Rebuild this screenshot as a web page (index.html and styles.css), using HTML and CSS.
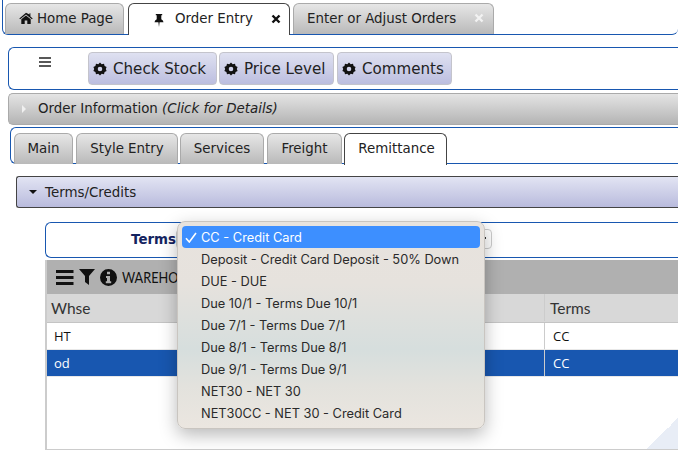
FILE: index.html
```html
<!DOCTYPE html>
<html lang="en">

<head>
  <meta charset="UTF-8" />
  <meta name="viewport" content="width=device-width, initial-scale=1" />
  <title>Order Entry</title>
  <link rel="stylesheet" href="styles.css">
</head>

<body>

  <div class="page">

    <!-- Top level tabs -->
    <div class="mainTabs">
      <div class="tab homeTab">
        <svg class="icon" width="14" height="12" viewBox="0 0 14 12"><path d="M7 0.8 0.3 6.4l.8.9L7 2.5l5.9 4.8.8-.9-2.3-1.9V1.2H10.500v1.400zM2.300 7.300V12H5.700V8.500H8.300V12H11.700V7.300L7 3.500z" /></svg>
        Home Page
      </div>
      <div class="tab tabActive orderTab">
        <svg class="icon pin" width="10" height="13" viewBox="0 0 10 13"><path d="M1.800 0H8.200V1.200H7.300V5.200Q9.300 6 9.500 8.200H5.600L5 13 4.400 8.200H.5Q.7 6 2.700 5.200V1.200H1.800z" /></svg>
        <span>Order Entry</span>
        <svg class="icon closeX" width="10" height="10" viewBox="0 0 10 10"><path d="M1.500 1.500 8.500 8.500M8.500 1.500 1.500 8.500" /></svg>
      </div>
      <div class="tab adjustTab">
        <span>Enter or Adjust Orders</span>
        <svg class="icon closeX closeLight" width="10" height="10" viewBox="0 0 10 10"><path d="M1.500 1.500 8.500 8.500M8.500 1.500 1.500 8.500" /></svg>
      </div>
    </div>

    <div class="toolbar">
      <svg class="menuIcon" width="12" height="10" viewBox="0 0 12 10"><path d="M0 1H12M0 5H12M0 9H12" /></svg>
      <button class="toolBtn" type="button"><svg class="gear" viewBox="0 0 14 14"><use href="#gearShape" /></svg>Check Stock</button>
      <button class="toolBtn" type="button"><svg class="gear" viewBox="0 0 14 14"><use href="#gearShape" /></svg>Price Level</button>
      <button class="toolBtn" type="button"><svg class="gear" viewBox="0 0 14 14"><use href="#gearShape" /></svg>Comments</button>
    </div>

    <div class="orderInfo">
      <span class="arrowRight"></span>
      <span>Order Information <em>(Click for Details)</em></span>
    </div>

    <div class="subTabs">
      <div class="tab subTab tabMain">Main</div>
      <div class="tab subTab tabStyle">Style Entry</div>
      <div class="tab subTab tabServices">Services</div>
      <div class="tab subTab tabFreight">Freight</div>
      <div class="tab subTab tabActive tabRemit">Remittance</div>
    </div>

    <div class="termsHeader">
      <span class="arrowDown"></span>
      <span>Terms/Credits</span>
    </div>

    <div class="termsForm">
      <label class="termsLabel">Terms</label>
      <div class="fakeSelect"><span class="selectDot"></span></div>
    </div>

    <div class="grid">
      <div class="gridBar">
        <svg class="barIcon" width="18" height="15" viewBox="0 0 18 15"><path d="M0 0H17.500V3H0zM0 6H17.500V9H0zM0 12H17.500V15H0z" /></svg>
        <svg class="barIcon" width="16" height="16" viewBox="0 0 16 16"><path d="M0 0H16L10 7V16L6 13V7z" /></svg>
        <svg class="barIcon" width="17" height="17" viewBox="0 0 17 17"><path fill-rule="evenodd" d="M8.500 0a8.500 8.500 0 1 0 0 17 8.500 8.500 0 0 0 0-17zM7 2.700H10V5.200H7zM6 7H10V12.300H11.200V14.300H5.800V12.300H7V9H6z" /></svg>
        <span class="barTitle">WAREHO</span>
      </div>
      <div class="gridRow gridHead">
        <div class="cellWide">Whse</div>
        <div class="cell">Terms</div>
      </div>
      <div class="gridRow">
        <div class="cellWide">HT</div>
        <div class="cell">CC</div>
      </div>
      <div class="gridRow rowSelected">
        <div class="cellWide">od</div>
        <div class="cell">CC</div>
      </div>
      <div class="gridEmpty"></div>
      <div class="gridFoot"><div class="footLeft"></div><div class="footMid"></div></div>
    </div>

    <!-- Native looking dropdown, lies over the form and grid -->
    <ul class="popup">
      <li class="popupItem popupSelected"><svg class="check" width="12" height="11" viewBox="0 0 12 11"><path d="M1 6.200 4.300 10 11 1" /></svg>CC - Credit Card</li>
      <li class="popupItem">Deposit - Credit Card Deposit - 50% Down</li>
      <li class="popupItem">DUE - DUE</li>
      <li class="popupItem">Due 10/1 - Terms Due 10/1</li>
      <li class="popupItem">Due 7/1 - Terms Due 7/1</li>
      <li class="popupItem">Due 8/1 - Terms Due 8/1</li>
      <li class="popupItem">Due 9/1 - Terms Due 9/1</li>
      <li class="popupItem">NET30 - NET 30</li>
      <li class="popupItem">NET30CC - NET 30 - Credit Card</li>
    </ul>

  </div>

  <svg width="0" height="0" class="defs">
    <defs>
      <path id="gearShape" fill-rule="evenodd" d="M7 .6 8.700 2.300 11 1.700 11.600 4 13.600 5.100 12.800 7 13.600 8.900 11.600 10 11 12.300 8.700 11.700 7 13.400 5.300 11.700 3 12.300 2.400 10 .4 8.900 1.200 7 .4 5.100 2.400 4 3 1.700 5.300 2.300zM7 4.700a2.300 2.300 0 1 0 0 4.600 2.300 2.300 0 0 0 0-4.600z" />
    </defs>
  </svg>

</body>

</html>
```

FILE: styles.css
```css
* {
  margin: 0;
  padding: 0;
  box-sizing: border-box;
}

html,
body {
  width: 678px;
  height: 450px;
  overflow: hidden;
  background: #fff;
}

body {
  font-family: "DejaVu Sans", sans-serif;
  color: #222;
}

.page {
  position: relative;
  width: 678px;
  height: 450px;
  overflow: hidden;
}

.defs {
  position: absolute;
}

/* tabs */
.tab {
  display: flex;
  align-items: center;
  justify-content: center;
  height: 31px;
  padding-bottom: 2px;
  border: 1px solid #aaa;
  border-bottom: none;
  border-radius: 6px 6px 0 0;
  background: linear-gradient(#e6e6e6, #b9b9b9);
  font-size: 13.4px;
  white-space: nowrap;
}

.tabActive {
  background: #fff;
  border-color: #444;
  height: 32px;
  margin-bottom: -1px;
  position: relative;
}

.mainTabs {
  display: flex;
  align-items: flex-start;
  height: 35px;
  margin-left: 2px;
  padding: 3px 0 0 2px;
  border: 1px solid #1857b0;
  border-width: 0 0 1px 1px;
  border-radius: 0 0 6px 6px;
}

.homeTab {
  width: 119px;
  gap: 4px;
  padding-left: 3px;
}

.orderTab {
  width: 162px;
  margin-left: 4px;
  padding-left: 25px;
  justify-content: flex-start;
}

.orderTab span {
  margin-left: 11px;
}

.adjustTab {
  width: 201px;
  margin-left: 3px;
  padding-left: 13px;
  justify-content: flex-start;
}

.icon {
  fill: #111;
  flex: none;
}

.pin {
  margin-top: 3px;
}

.closeX {
  fill: none;
  stroke: #111;
  stroke-width: 2.4;
  margin-left: 18px;
}

.closeLight {
  stroke: #f2f2f2;
}

/* toolbar */
.toolbar {
  display: flex;
  align-items: flex-start;
  height: 43px;
  margin: 12px 0 0 8px;
  padding: 4px 0 0 79px;
  border: 1px solid #1857b0;
  border-right: none;
  border-radius: 6px 0 0 6px;
}

.menuIcon {
  fill: none;
  stroke: #222;
  stroke-width: 1.6;
  margin: 5px 37px 0 -49px;
}

.toolBtn {
  display: flex;
  align-items: center;
  gap: 6px;
  height: 33px;
  width: 129px;
  padding-left: 4px;
  border: 1px solid #c4c4cc;
  border-radius: 4px;
  background: linear-gradient(#dfe1f1, #bcbedf);
  font-family: "DejaVu Sans", sans-serif;
  font-size: 15.1px;
  color: #222;
}

.toolBtn:nth-of-type(2),
.toolBtn:nth-of-type(3) {
  width: 115px;
}

.toolBtn:nth-of-type(2) {
  margin-left: 2px;
}

.toolBtn:nth-of-type(3) {
  margin-left: 3px;
}

.gear {
  width: 14px;
  height: 14px;
  fill: #111;
  flex: none;
}

/* accordion bars */
.orderInfo {
  display: flex;
  align-items: center;
  height: 32px;
  margin: 3px 0 0 8px;
  padding: 0 0 1px 13px;
  gap: 12px;
  border: 1px solid #aaa;
  border-right: none;
  border-radius: 5px 0 0 5px;
  background: linear-gradient(#e4e4e4, #b4b4b4);
  font-size: 13.4px;
}

.arrowRight {
  width: 0;
  height: 0;
  border-left: 4px solid #f0f0f0;
  border-top: 4px solid transparent;
  border-bottom: 4px solid transparent;
}

.subTabs {
  display: flex;
  align-items: flex-start;
  height: 37px;
  margin: 2px 0 0 10px;
  padding: 5px 0 0 3px;
  border: 1px solid #1857b0;
  border-width: 1px 0 1px 1px;
  border-radius: 6px 0 0 6px;
}

.subTab {
  height: 31px;
}

.subTab.tabActive {
  height: 32px;
}

.tabMain {
  width: 59px;
}

.tabStyle {
  width: 102px;
  margin-left: 3px;
}

.tabServices {
  width: 84px;
  margin-left: 2px;
}

.tabFreight {
  width: 75px;
  margin-left: 3px;
}

.tabRemit {
  width: 103px;
  margin-left: 2px;
  padding-left: 2px;
}

.termsHeader {
  display: flex;
  align-items: center;
  height: 32px;
  margin: 12px 0 0 16px;
  padding-left: 12px;
  gap: 8px;
  border: 1px solid #444;
  border-right: none;
  border-radius: 3px 0 0 3px;
  background: linear-gradient(#e2e4f3, #b9bbdd);
  font-size: 13.4px;
}

.arrowDown {
  width: 0;
  height: 0;
  border-top: 4px solid #111;
  border-left: 4px solid transparent;
  border-right: 4px solid transparent;
}

/* terms form */
.termsForm {
  display: flex;
  align-items: center;
  height: 36px;
  margin: 14px 0 0 45px;
  border: 1px solid #1857b0;
  border-right: none;
  border-radius: 6px 0 0 6px;
}

.termsLabel {
  width: 130px;
  padding-bottom: 1px;
  text-align: right;
  font-size: 13.4px;
  font-weight: bold;
  color: #14235f;
}

.fakeSelect {
  position: relative;
  width: 316px;
  height: 20px;
  margin-bottom: 2px;
  border: 1px solid #ccc;
  border-radius: 4px;
}

.selectDot {
  position: absolute;
  right: 5px;
  top: 7px;
  width: 2px;
  height: 2px;
  background: #333;
}

/* warehouse grid */
.grid {
  display: flex;
  flex-direction: column;
  height: 191px;
  margin: 2px 0 0 45px;
  border-left: 2px solid #ccc;
  font-family: "Open Sans", sans-serif;
}

.gridBar {
  display: flex;
  align-items: center;
  gap: 5px;
  height: 34px;
  padding-left: 9px;
  background: #b0b0b0;
}

.barIcon {
  fill: #111;
  flex: none;
}

.barTitle {
  font-family: Lato, sans-serif;
  font-size: 15.5px;
  color: #111;
  transform: scaleX(0.82);
  transform-origin: left center;
}

.gridRow {
  display: flex;
  height: 27px;
  font-size: 13px;
  font-weight: 500;
  color: #111;
  border-bottom: 1px solid #e8e8e8;
}

.gridHead {
  height: 29px;
  padding-bottom: 1px;
  background: #d8d8d8;
  border-bottom: 1px solid #c4c4c4;
  font-family: Lato, sans-serif;
  font-size: 15.5px;
  font-weight: 400;
  color: #333;
}

.cellWide {
  display: flex;
  align-items: center;
  width: 498px;
  padding-left: 7px;
  border-right: 1px solid #ccc;
}

.cell {
  display: flex;
  align-items: center;
  flex: 1;
  padding-left: 8px;
}

.gridHead .cellWide {
  padding-left: 4px;
}

.gridHead .cell {
  padding-left: 5px;
}

.rowSelected {
  background: #1857b0;
  color: #fff;
}

.gridEmpty {
  flex: 1;
  background: linear-gradient(135deg, transparent 50%, #e8edf6 50%) no-repeat right bottom / 31px 31px;
}

.gridFoot {
  display: flex;
  height: 2px;
  border-top: 1px solid #ccc;
}

.footLeft {
  width: 199px;
  border-right: 1px solid #ccc;
}

.footMid {
  width: 299px;
  border-right: 1px solid #ccc;
}

/* dropdown */
.popup {
  position: absolute;
  left: 177px;
  top: 221px;
  width: 308px;
  height: 208px;
  padding: 4px;
  list-style: none;
  border: 1px solid #c9c5c0;
  border-radius: 8px;
  background: linear-gradient(#e8e3de 0%, #e6e2dd 30%, #d6dedd 62%, #e3e2dd 80%, #ebe6e0 100%);
  box-shadow: 0 6px 18px rgba(0, 0, 0, 0.28);
  font-family: Inter, sans-serif;
  font-size: 12.8px;
  color: #2a2a2a;
}

.popupItem {
  display: flex;
  align-items: center;
  height: 22px;
  padding-left: 19px;
  border-radius: 4px;
  white-space: nowrap;
}

.popupSelected {
  background: #3d8fff;
  color: #fff;
  padding-left: 3px;
}

.check {
  margin-right: 4px;
  fill: none;
  stroke: #fff;
  stroke-width: 1.6;
  flex: none;
}
```
